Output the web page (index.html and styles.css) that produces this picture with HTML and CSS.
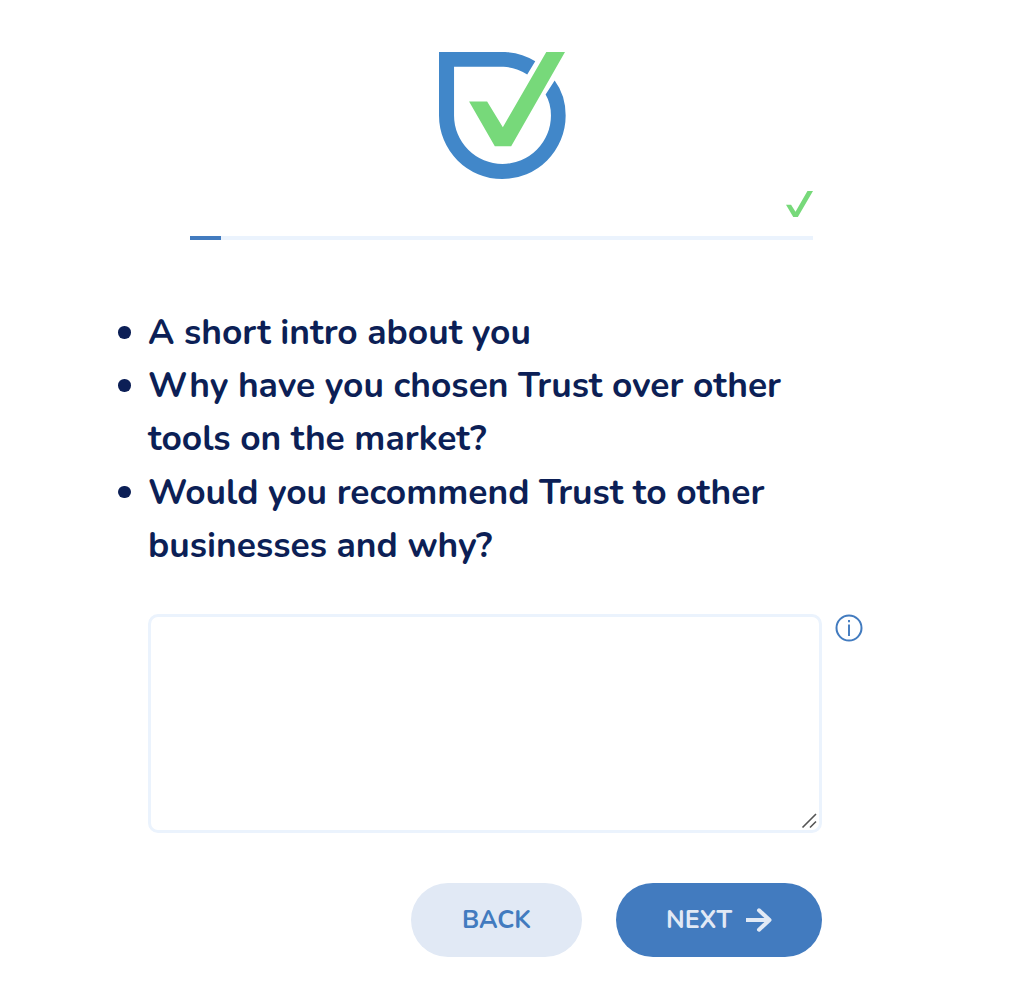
FILE: index.html
```html
<!DOCTYPE html>
<html lang="en">

<head>
  <meta charset="UTF-8">
  <meta name="viewport" content="width=device-width, initial-scale=1.0">
  <link rel="stylesheet" href="styles.css">
  <title>Trust</title>
</head>

<body>
  <div class="wrapper">
    <div class="logo">
      <svg width="127" height="127" viewBox="42 36 380 380">
        <path fill="#4187c9" d="M42 36H240Q290 38 330 64L306 103Q272 82 235 80H87V226A145 145 0 0 0 377 226Q377 190 361 163L388 121Q421 165 421 226A189.500 190 0 0 1 42 226Z"/>
        <path fill="#77d97a" d="M132 184H186L233 261L363 36H419L258 318H209Z"/>
      </svg>
    </div>
    <div class="progress">
      <svg class="done" width="27" height="26" viewBox="132 36 287 282" preserveAspectRatio="none">
        <path fill="#77d97a" d="M132 184H186L233 261L360 36H419L258 318H209Z"/>
      </svg>
      <div class="track">
        <div class="bar" style="width: 5%"></div>
      </div>
    </div>
    <ul class="questions">
      <li>A short intro about you</li>
      <li>Why have you chosen Trust over other tools on the market?</li>
      <li>Would you recommend Trust to other businesses and why?</li>
    </ul>
    <div class="answer">
      <div class="field">
        <textarea></textarea>
        <svg class="grip" width="16" height="16" viewBox="0 0 16 16">
          <path d="M1.500 14.500L15 1M9 14.500L15 8.500" fill="none" stroke="#555" stroke-width="1.600"/>
        </svg>
      </div>
      <svg class="info" width="28" height="28" viewBox="0 0 28 28">
        <circle cx="14" cy="14" r="12.500" fill="none" stroke="#427bbf" stroke-width="2"/>
        <path d="M14 6V8.200M14 10.500V22" stroke="#427bbf" stroke-width="1.900"/>
      </svg>
    </div>
    <div class="buttons">
      <button class="btn back">BACK</button>
      <button class="btn next">NEXT
        <svg width="26" height="24" viewBox="0 0 26 24">
          <path d="M0 12H23" stroke="#e1e9f5" stroke-width="4"/>
          <path d="M13 2.300L23.500 12L13 21.700" fill="none" stroke="#e1e9f5" stroke-width="4" stroke-linecap="round" stroke-linejoin="round"/>
        </svg>
      </button>
    </div>
  </div>
</body>

</html>
```

FILE: styles.css
```css
* {
  margin: 0;
  padding: 0;
  box-sizing: border-box;
}

body {
  background-color: #fff;
  font-family: Nunito, Lato, "Open Sans", sans-serif;
}

svg {
  display: block;
}

.wrapper {
  width: 715px;
  margin-left: 148px;
  padding-top: 52px;
}

.logo {
  padding-left: 291px;
}

.progress {
  width: 623px;
  margin: 12px 0 0 42px;
}

.progress .done {
  margin-left: auto;
}

.progress .track {
  height: 4px;
  margin-top: 18.5px;
  background-color: #ebf3fd;
}

.progress .bar {
  height: 4px;
  background-color: #427bbf;
}

.questions {
  width: 674px;
  margin-top: 66.5px;
  list-style: none;
  color: #0c1f56;
  font-size: 35.4px;
  font-weight: bold;
  line-height: 53.2px;
}

.questions li {
  position: relative;
}

/* bullet */
.questions li::before {
  content: "";
  position: absolute;
  left: -30px;
  top: 20px;
  width: 12.5px;
  height: 12.5px;
  border-radius: 50%;
  background-color: #0c1f56;
}

.answer {
  display: flex;
  gap: 13px;
  margin-top: 42px;
}

.field {
  position: relative;
  width: 674px;
  height: 219px;
}

.field textarea {
  display: block;
  width: 100%;
  height: 100%;
  padding: 16px;
  border: 3px solid #ebf3fd;
  border-radius: 10px;
  outline: none;
  resize: none;
}

.field .grip {
  position: absolute;
  right: 5px;
  bottom: 4px;
}

.buttons {
  display: flex;
  justify-content: flex-end;
  gap: 34px;
  width: 674px;
  margin-top: 50px;
}

.btn {
  display: flex;
  align-items: center;
  justify-content: center;
  height: 74px;
  border: none;
  border-radius: 37px;
  font-family: inherit;
  font-size: 25px;
  font-weight: bold;
  cursor: pointer;
}

.back {
  width: 171px;
  background-color: #e1e9f5;
  color: #427bbf;
}

.next {
  gap: 14px;
  width: 206px;
  background-color: #427bbf;
  color: #e1e9f5;
}

.next svg {
  overflow: visible;
}
```
